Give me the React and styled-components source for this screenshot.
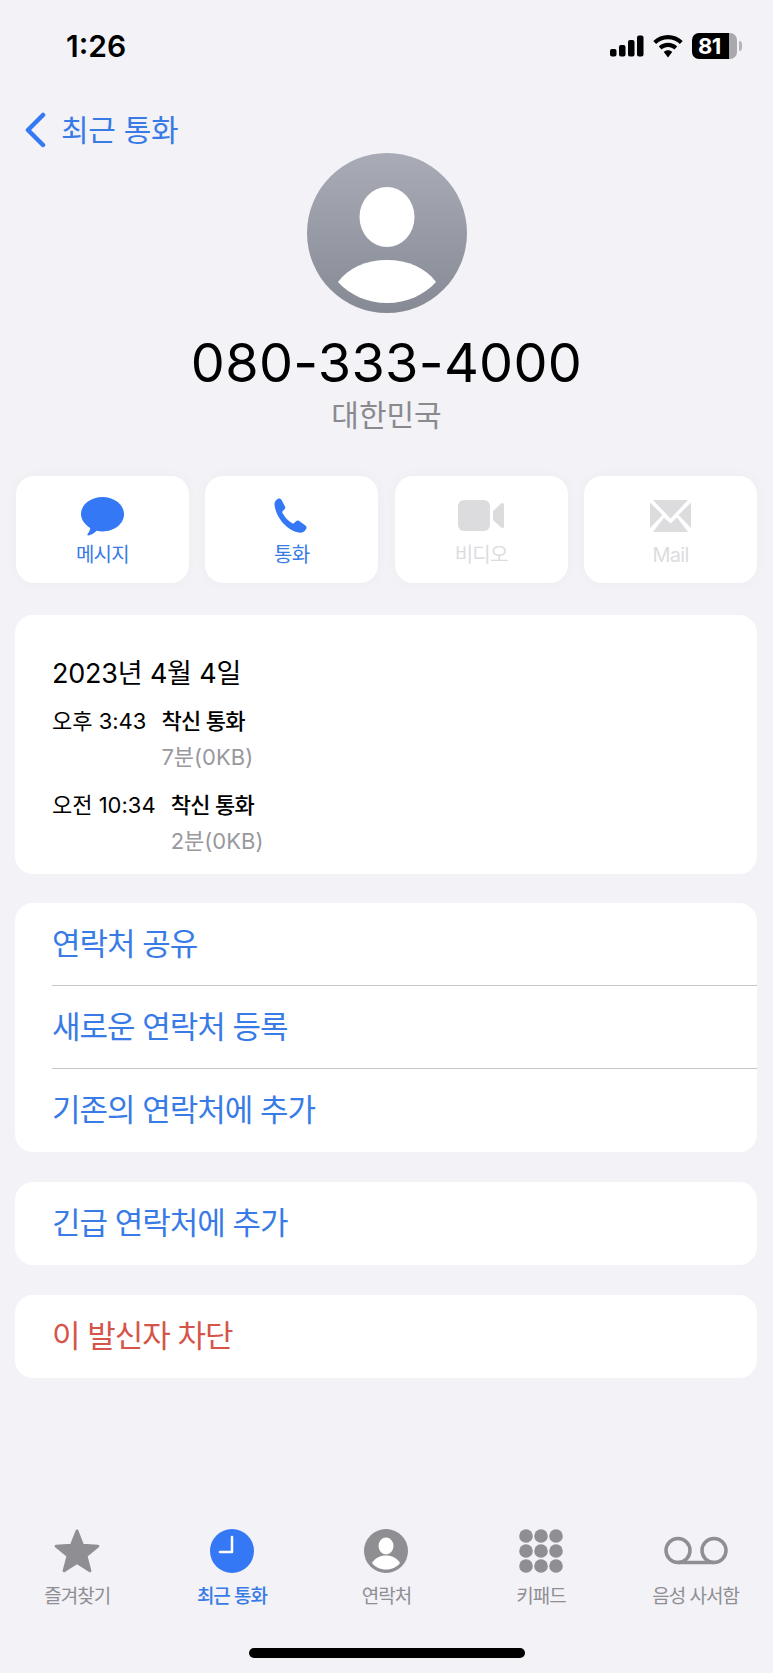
import React from "react";
import styled, { createGlobalStyle } from "styled-components";

const GlobalStyle = createGlobalStyle`
  html, body {
    margin: 0;
    padding: 0;
    background: #f2f2f7;
  }
  body {
    font-family: "Inter", "Noto Sans CJK KR", sans-serif;
  }
`;

const Screen = styled.div`
  width: 773px;
  height: 1673px;
  background: #f2f2f7;
  display: flex;
  flex-flow: column;
  overflow: hidden;
`;

const StatusBar = styled.div`
  height: 94px;
  box-sizing: border-box;
  padding: 28px 36px 0 66px;
  display: flex;
  justify-content: space-between;
  align-items: flex-start;
`;

const Time = styled.div`
  font-size: 30px;
  font-weight: 600;
  line-height: 36px;
  color: #000;
`;

const StatusIcons = styled.div`
  display: flex;
  align-items: center;
  gap: 9px;
  height: 36px;
`;

const Battery = styled.div`
  width: 45px;
  height: 26px;
  border-radius: 7px;
  background: linear-gradient(90deg, #000 0 82%, #a9a9ad 82% 100%);
  color: #fff;
  font-size: 22px;
  font-weight: 700;
  line-height: 26px;
  letter-spacing: -0.5px;
  box-sizing: border-box;
  padding-left: 6px;
  position: relative;
  &::after {
    content: "";
    position: absolute;
    right: -5px;
    top: 8px;
    width: 3px;
    height: 10px;
    border-radius: 0 3px 3px 0;
    background: #b5b5b9;
  }
`;

const NavBack = styled.div`
  height: 56px;
  box-sizing: border-box;
  padding: 16px 0 0 24px;
  display: flex;
  align-items: center;
  gap: 15px;
  color: #387be6;
  font-size: 30px;
  line-height: 40px;
  letter-spacing: -0.3px;
`;

const Header = styled.div`
  display: flex;
  flex-flow: column;
  align-items: center;
  margin-top: 3px;
`;

const Avatar = styled.svg`
  width: 160px;
  height: 160px;
  display: block;
`;

const PhoneNumber = styled.div`
  margin-top: 18px;
  font-size: 54px;
  line-height: 64px;
  letter-spacing: 0.3px;
  color: #000;
`;

const Region = styled.div`
  font-size: 30px;
  line-height: 40px;
  color: #8a8a8e;
`;

const Actions = styled.div`
  display: grid;
  grid-template-columns: repeat(4, 1fr);
  gap: 16.5px;
  padding: 0 16px;
  margin-top: 41px;
`;

const ActionCard = styled.div`
  height: 107px;
  background: #fff;
  border-radius: 18px;
  box-shadow: 0 0 14px rgba(0, 0, 0, 0.03);
  display: flex;
  flex-flow: column;
  align-items: center;
  color: ${(props) => (props.$disabled ? "#dcdcde" : "#387be6")};
  font-size: 20px;
  line-height: 26px;
  letter-spacing: -0.7px;
`;

const ActionIcon = styled.div`
  height: 40px;
  margin-top: 20px;
  margin-bottom: 6px;
  display: flex;
  align-items: center;
  justify-content: center;
`;

const Card = styled.div`
  background: #fff;
  border-radius: 18px;
  margin: ${(props) => props.$gap}px 16px 0 15px;
`;

const CallInfo = styled(Card)`
  height: 259px;
  box-sizing: border-box;
  padding: 40px 37px 0;
`;

const CallDate = styled.div`
  font-size: 27px;
  line-height: 38px;
  letter-spacing: -0.2px;
  color: #000;
  margin-bottom: 10px;
`;

const CallEntry = styled.div`
  display: grid;
  grid-template-columns: auto auto 1fr;
  column-gap: 15px;
  font-size: 22px;
  line-height: 36px;
  margin-bottom: 12px;
  color: #000;
`;

const CallType = styled.div`
  font-weight: 500;
  letter-spacing: -0.7px;
`;

const CallLength = styled.div`
  grid-column: 2 / 4;
  color: #98989d;
`;

const ActionRow = styled.div`
  height: 83px;
  box-sizing: border-box;
  padding-bottom: 6px;
  margin-left: 37px;
  display: flex;
  align-items: center;
  font-size: 31px;
  letter-spacing: -1px;
  color: ${(props) => (props.$danger ? "#d5554b" : "#387be6")};
  border-bottom: ${(props) => (props.$line ? "1px solid #c6c6c8" : "none")};
`;

const TabBar = styled.div`
  margin-top: auto;
  display: grid;
  grid-template-columns: repeat(5, 154.6px);
  padding-bottom: 38px;
`;

const Tab = styled.div`
  display: flex;
  flex-flow: column;
  align-items: center;
  color: ${(props) => (props.$active ? "#387be6" : "#8e8e93")};
  font-size: 19px;
  font-weight: ${(props) => (props.$active ? 500 : 400)};
  line-height: 26px;
  letter-spacing: -1px;
`;

const TabIcon = styled.div`
  height: 48px;
  margin-bottom: 9px;
  display: flex;
  align-items: center;
  justify-content: center;
`;

const HomeIndicator = styled.div`
  width: 276px;
  height: 10px;
  border-radius: 5px;
  background: #000;
  margin: 0 auto 15px;
`;

const App = () => {
  return (
    <>
      <GlobalStyle />
      <Screen>
        <StatusBar>
          <Time>1:26</Time>
          <StatusIcons>
            <svg width="34" height="22" viewBox="0 0 34 22">
              <rect x="0" y="14" width="6.5" height="7.500" rx="2" fill="#000" />
              <rect x="9" y="10" width="6.500" height="11.500" rx="2" fill="#000" />
              <rect x="18" y="5" width="6.500" height="16.500" rx="2" fill="#000" />
              <rect x="27" y="0.500" width="6.500" height="21" rx="2" fill="#000" />
            </svg>
            <svg width="30" height="23" viewBox="0 0 30 23">
              <path d="M15 0c5.600 0 10.800 2.200 14.700 5.900l-2.800 3C23.800 6 19.600 4.200 15 4.200S6.200 6 3.100 8.900l-2.800-3C4.200 2.200 9.400 0 15 0z" fill="#000" />
              <path d="M15 7.800c3.500 0 6.700 1.300 9.200 3.600l-2.800 3c-1.700-1.500-3.900-2.400-6.400-2.400s-4.700.9-6.400 2.400l-2.800-3c2.500-2.300 5.700-3.600 9.200-3.600z" fill="#000" />
              <path d="M15 15.300c1.600 0 3.100.6 4.200 1.600L15 22.500l-4.200-5.600c1.100-1 2.600-1.600 4.200-1.600z" fill="#000" />
            </svg>
            <Battery>81</Battery>
          </StatusIcons>
        </StatusBar>

        <NavBack>
          <svg width="22" height="36" viewBox="0 0 22 36">
            <path d="M19 3L4 18l15 15" fill="none" stroke="#3478f6" strokeWidth="4.500" strokeLinecap="round" strokeLinejoin="round" />
          </svg>
          최근 통화
        </NavBack>

        <Header>
          <Avatar viewBox="0 0 160 160">
            <defs>
              <linearGradient id="avatarFill" x1="0" y1="0" x2="0" y2="1">
                <stop offset="0" stopColor="#a9acb6" />
                <stop offset="1" stopColor="#868a94" />
              </linearGradient>
            </defs>
            <circle cx="80" cy="80" r="80" fill="url(#avatarFill)" />
            <ellipse cx="80" cy="64" rx="27.500" ry="30" fill="#fff" />
            <path d="M31 129c10-14 28-22 49-22s39 8 49 22c-12 13-29 21-49 21s-37-8-49-21z" fill="#fff" />
          </Avatar>
          <PhoneNumber>080-333-4000</PhoneNumber>
          <Region>대한민국</Region>
        </Header>

        <Actions>
          <ActionCard>
            <ActionIcon>
              <svg width="43" height="39" viewBox="0 0 43 39">
                <path d="M21.500 0C33.400 0 43 7.700 43 17.200S33.400 34.400 21.500 34.400c-2 0-4-.2-5.900-.7-2 1.900-5 4.200-8.200 4.800-1 .1-1.400-.7-.8-1.400 1.200-1.500 2.400-3.700 2.700-6C3.600 27.200 0 22.500 0 17.200 0 7.700 9.600 0 21.500 0z" fill="#3478f6" />
              </svg>
            </ActionIcon>
            메시지
          </ActionCard>
          <ActionCard>
            <ActionIcon>
              <svg width="36" height="36" viewBox="0 0 36 36">
                <path d="M.5 7C.2 4.300 1.800 1.800 4 .8c1.500-.6 2.800 0 3.600 1.300l3.400 6.300c.6 1.100.3 2.300-.6 3.100l-1.500 1.300c-.7.700-.8 1.500-.4 2.300 2.300 4.200 5.400 7.500 9.300 10 .8.500 1.600.4 2.300-.2l1.900-1.700c.9-.8 2.100-1 3.200-.3l5.900 4.300c1.500 1.100 1.800 2.300 1 3.700-1.100 2.200-3.700 4-6.300 3.800C13.800 33 2.200 20.500.5 7z" fill="#3478f6" />
              </svg>
            </ActionIcon>
            통화
          </ActionCard>
          <ActionCard $disabled>
            <ActionIcon>
              <svg width="46" height="32" viewBox="0 0 46 32">
                <rect x="0" y="0" width="32" height="31" rx="6" fill="#dcdcde" />
                <path d="M35 11l8-7.500c1-1 3-.5 3 1v22c0 1.500-2 2-3 1l-8-7.500z" fill="#dcdcde" />
              </svg>
            </ActionIcon>
            비디오
          </ActionCard>
          <ActionCard $disabled>
            <ActionIcon>
              <svg width="41" height="32" viewBox="0 0 41 32">
                <path d="M3 0h35L20.500 18.500z" fill="#dcdcde" />
                <path d="M0 2.500V28l12.500-13zM41 2.500V28L28.500 15z" fill="#dcdcde" />
                <path d="M3 32l11-14.500 6.500 6 6.500-6L38 32z" fill="#dcdcde" />
              </svg>
            </ActionIcon>
            Mail
          </ActionCard>
        </Actions>

        <CallInfo $gap={32}>
          <CallDate>2023년 4월 4일</CallDate>
          <CallEntry>
            <div>오후 3:43</div>
            <CallType>착신 통화</CallType>
            <CallLength>7분(0KB)</CallLength>
          </CallEntry>
          <CallEntry>
            <div>오전 10:34</div>
            <CallType>착신 통화</CallType>
            <CallLength>2분(0KB)</CallLength>
          </CallEntry>
        </CallInfo>

        <Card $gap={29}>
          <ActionRow $line>연락처 공유</ActionRow>
          <ActionRow $line>새로운 연락처 등록</ActionRow>
          <ActionRow>기존의 연락처에 추가</ActionRow>
        </Card>

        <Card $gap={30}>
          <ActionRow>긴급 연락처에 추가</ActionRow>
        </Card>

        <Card $gap={30}>
          <ActionRow $danger>이 발신자 차단</ActionRow>
        </Card>

        <TabBar>
          <Tab>
            <TabIcon>
              <svg width="48" height="46" viewBox="0 0 48 46">
                <polygon
                  points="24,3 29.600,17.300 44.900,18.200 33,27.900 36.900,42.800 24,34.500 11.100,42.800 15,27.900 3.100,18.200 18.400,17.300"
                  fill="#8e8e93"
                  stroke="#8e8e93"
                  strokeWidth="3"
                  strokeLinejoin="round"
                />
              </svg>
            </TabIcon>
            즐겨찾기
          </Tab>
          <Tab $active>
            <TabIcon>
              <svg width="44" height="44" viewBox="0 0 44 44">
                <circle cx="22" cy="22" r="22" fill="#3478f6" />
                <path d="M22 8v15h-12" fill="none" stroke="#fff" strokeWidth="2.500" strokeLinecap="round" strokeLinejoin="round" />
              </svg>
            </TabIcon>
            최근 통화
          </Tab>
          <Tab>
            <TabIcon>
              <svg width="44" height="44" viewBox="0 0 44 44">
                <circle cx="22" cy="22" r="22" fill="#8e8e93" />
                <ellipse cx="22" cy="17" rx="7.500" ry="8.500" fill="#fff" />
                <path d="M8 34c3-5 8-7.500 14-7.500S33 29 36 34c-3 4-8 6.500-14 6.500S11 38 8 34z" fill="#fff" />
              </svg>
            </TabIcon>
            연락처
          </Tab>
          <Tab>
            <TabIcon>
              <svg width="44" height="44" viewBox="0 0 44 44">
                {[7, 22, 37].map((cy) =>
                  [7, 22, 37].map((cx) => (
                    <circle key={`${cx}-${cy}`} cx={cx} cy={cy} r="6.800" fill="#8e8e93" />
                  ))
                )}
              </svg>
            </TabIcon>
            키패드
          </Tab>
          <Tab>
            <TabIcon>
              <svg width="64" height="30" viewBox="0 0 64 30">
                <circle cx="14" cy="14.500" r="12" fill="none" stroke="#8e8e93" strokeWidth="3.500" />
                <circle cx="50" cy="14.500" r="12" fill="none" stroke="#8e8e93" strokeWidth="3.500" />
                <path d="M14 26.500h36" fill="none" stroke="#8e8e93" strokeWidth="3.500" />
              </svg>
            </TabIcon>
            음성 사서함
          </Tab>
        </TabBar>
        <HomeIndicator />
      </Screen>
    </>
  );
};

export default App;
